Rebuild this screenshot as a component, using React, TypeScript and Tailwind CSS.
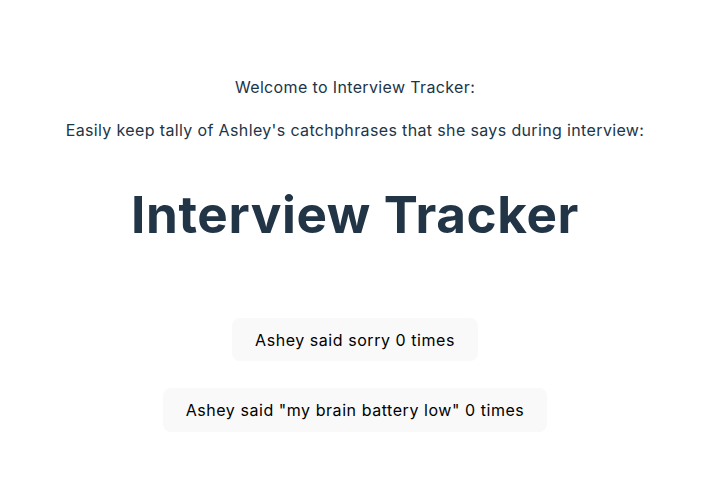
import { useState } from 'react';

export default function App() {
  const [sorry, setSorry] = useState(0);
  const [battery, setBattery] = useState(0);

  return (
    <div className="min-h-screen bg-white text-[#213547] font-['Inter',sans-serif] antialiased">
      <div className="flex flex-col items-center pt-[75px] text-center">
        {/* Intro copy */}
        <p className="text-base leading-6 tracking-[0.36px]">Welcome to Interview Tracker:</p>
        <p className="text-base leading-6 tracking-[0.36px] mt-[19px]">
          Easily keep tally of Ashley's catchphrases that she says during interview:
        </p>

        <h1 className="mt-[44px] text-[51.2px] leading-[56px] font-bold tracking-[0.6px]">Interview Tracker</h1>

        {/* Counters */}
        <div className="mt-[76px] flex flex-col items-center gap-[27px]">
          <button
            onClick={() => setSorry(sorry + 1)}
            className="h-[43px] px-[23px] rounded-lg bg-[#f9f9f9] text-black text-base font-normal tracking-[0.55px]"
          >
            Ashey said sorry {sorry} times
          </button>
          <button
            onClick={() => setBattery(battery + 1)}
            className="h-[44px] px-[23px] rounded-lg bg-[#f9f9f9] text-black text-base font-normal tracking-[0.55px]"
          >
            Ashey said "my brain battery low" {battery} times
          </button>
        </div>
      </div>
    </div>
  );
}
